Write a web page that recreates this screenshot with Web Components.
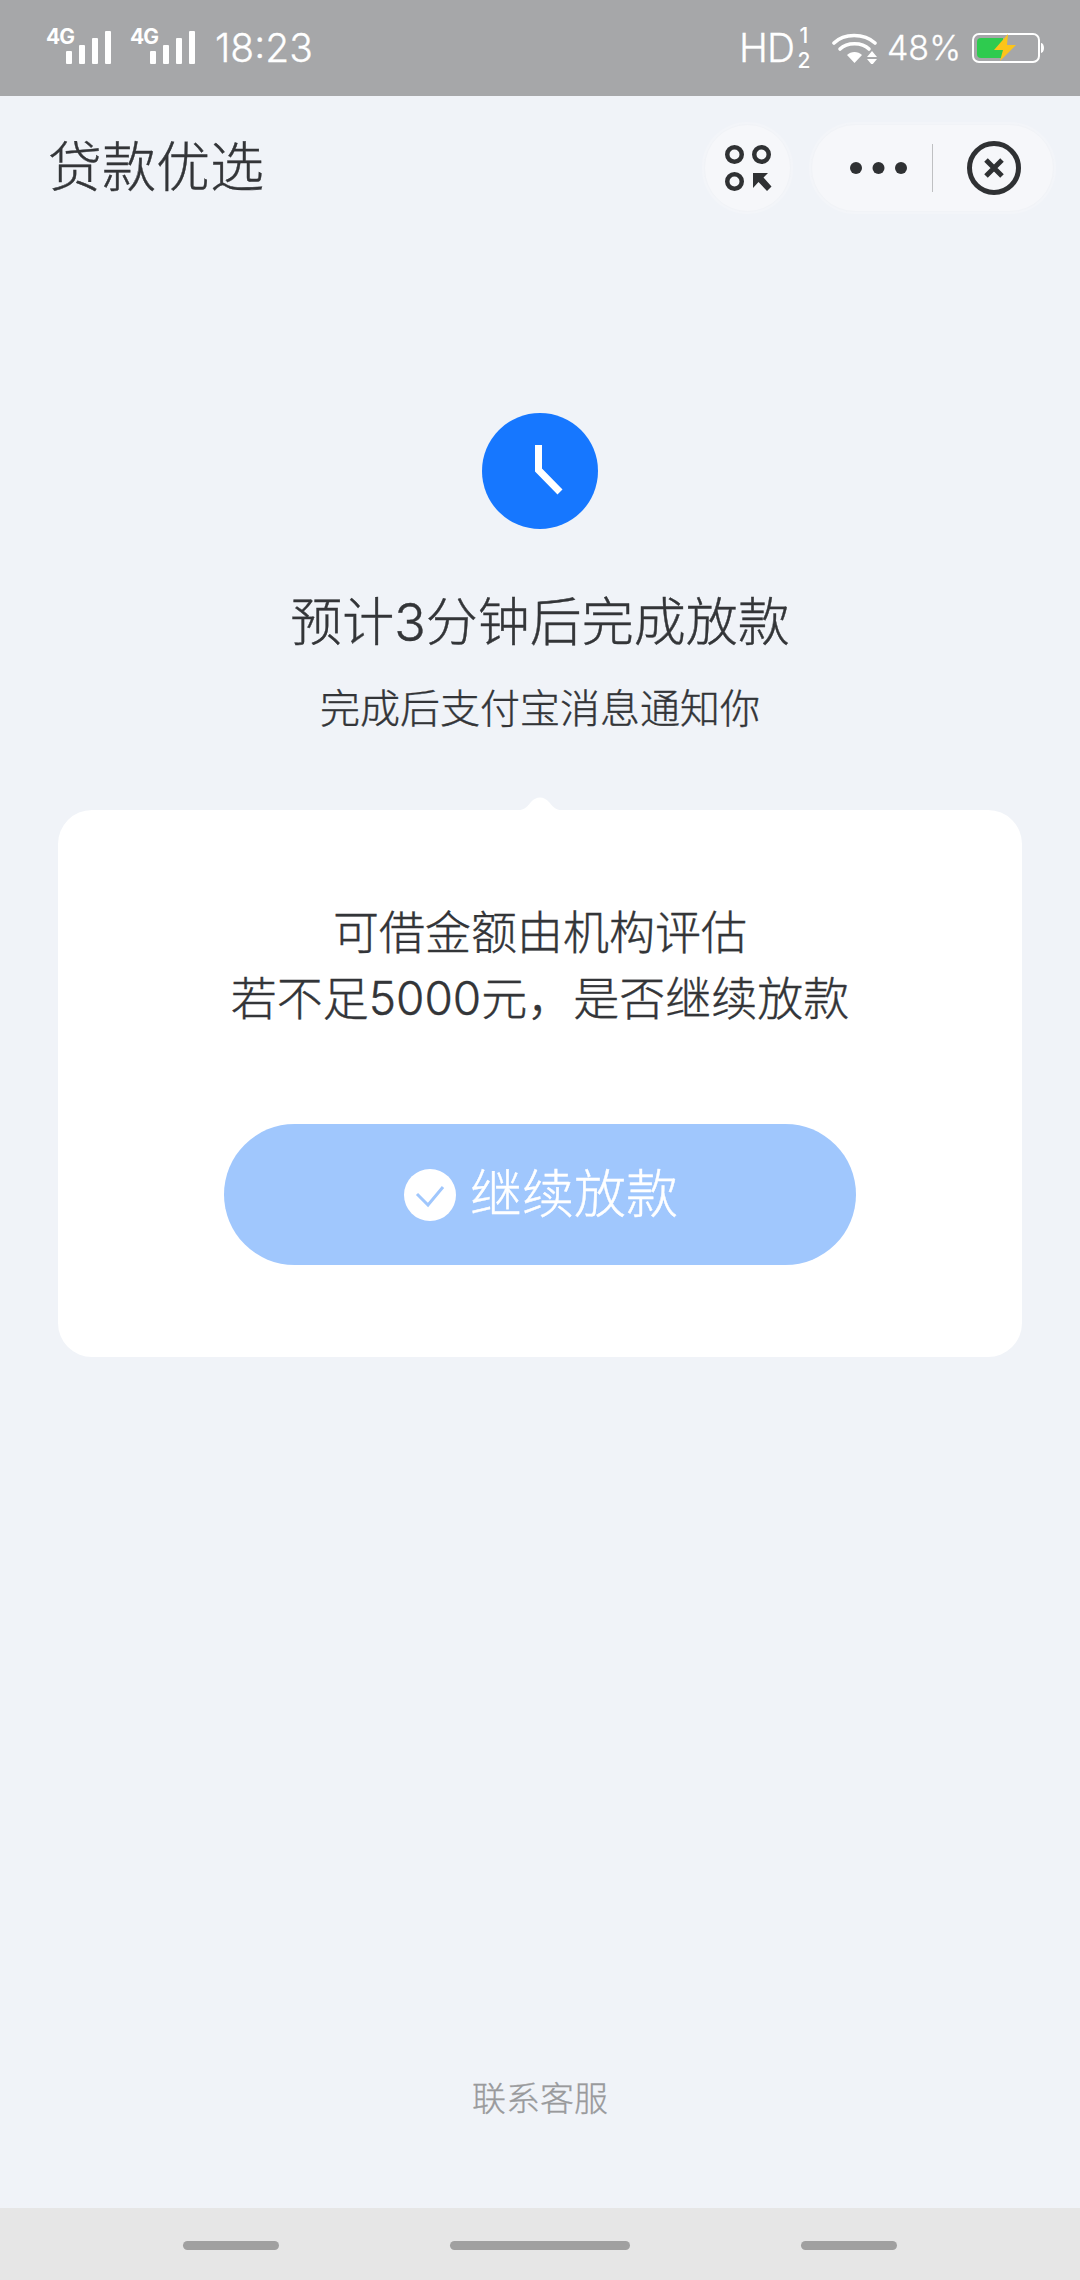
<!DOCTYPE html>
<html lang="zh">
<head>
<meta charset="utf-8">
<title>贷款优选</title>
<style>
    html, body {
        margin: 0;
        padding: 0;
        height: 2280px;
        background: #f0f3f8;
        font-family: 'Inter', 'Noto Sans CJK SC', 'Noto Sans', sans-serif;
    }
</style>
</head>
<body>
<loan-page>
    <status-bar slot="status"></status-bar>
    <nav-bar slot="nav">贷款优选</nav-bar>
    <clock-badge slot="main"></clock-badge>
    <result-title slot="main">
        预计3分钟后完成放款
        <span slot="sub">完成后支付宝消息通知你</span>
    </result-title>
    <tip-card slot="main">
        <span>可借金额由机构评估</span>
        <span>若不足5000元，是否继续放款</span>
        <check-button slot="action">继续放款</check-button>
    </tip-card>
    <span slot="footer">联系客服</span>
    <home-bar slot="home"></home-bar>
</loan-page>

<script>
class LoanPage extends HTMLElement {
    constructor() {
        super();
        this.shadowDOM = this.attachShadow({ mode: 'open' });
        this.shadowDOM.innerHTML = `
            <style>
                :host {
                    display: flex;
                    flex-direction: column;
                    height: 2280px;
                    background: #f0f3f8;
                }
                main {
                    flex: 1;
                    display: flex;
                    flex-direction: column;
                    align-items: center;
                    padding-top: 197px;
                }
                footer {
                    height: 134px;
                    text-align: center;
                    font-size: 34px;
                    line-height: 50px;
                    color: #999a9c;
                    font-weight: 300;
                    -webkit-text-stroke: 0.3px #999a9c;
                }
            </style>
            <slot name="status"></slot>
            <slot name="nav"></slot>
            <main><slot name="main"></slot></main>
            <footer><slot name="footer"></slot></footer>
            <slot name="home"></slot>
        `;
    }
}

class StatusBar extends HTMLElement {
    constructor() {
        super();
        this.shadowDOM = this.attachShadow({ mode: 'open' });
        const signal = `
            <span class="signal">
                <b>4G</b>
                <svg width="65" height="33" viewBox="0 0 65 33">
                    <g fill="#fff">
                        <rect x="20" y="20" width="6" height="13" rx="1"/>
                        <rect x="33" y="14" width="6" height="19" rx="1"/>
                        <rect x="46" y="7" width="6" height="26" rx="1"/>
                        <rect x="59" y="0" width="6" height="33" rx="1"/>
                    </g>
                </svg>
            </span>`;
        this.shadowDOM.innerHTML = `
            <style>
                :host {
                    display: flex;
                    box-sizing: border-box;
                    height: 96px;
                    padding: 0 0 0 46px;
                    align-items: center;
                    background: #a6a7a9;
                    color: #fff;
                    font-family: 'Inter', 'Noto Sans', sans-serif;
                    font-weight: 300;
                }
                .signal { position: relative; display: block; width: 65px; height: 33px; margin-right: 19px; margin-top: -1px; }
                .signal b {
                    position: absolute;
                    left: 0;
                    top: -7px;
                    font-size: 21px;
                    line-height: 26px;
                    font-weight: 700;
                    letter-spacing: -1px;
                }
                svg { display: block; }
                .time { font-size: 39px; line-height: 48px; margin-left: 1px; -webkit-text-stroke: 0.3px #fff; }
                .right { margin-left: auto; display: flex; align-items: center; padding-right: 36px; }
                .hd { font-size: 39px; line-height: 48px; letter-spacing: -1px; -webkit-text-stroke: 0.3px #fff; }
                .frac {
                    display: flex;
                    flex-direction: column;
                    font-size: 21px;
                    line-height: 25px;
                    font-weight: 500;
                    margin: 0 0 0 2px;
                    width: 16px;
                    align-items: center;
                }
                .wifi { margin-left: 20px; }
                .pct { font-size: 34px; line-height: 48px; margin-left: 9px; -webkit-text-stroke: 0.3px #fff; }
                .batt { margin-left: 11px; }
            </style>
            ${signal}${signal}
            <span class="time">18:23</span>
            <div class="right">
                <span class="hd">HD</span>
                <span class="frac"><span>1</span><span>2</span></span>
                <svg class="wifi" width="46" height="32" viewBox="0 0 46 32">
                    <g fill="none" stroke="#fff" stroke-width="3.6" stroke-linecap="round">
                        <path d="M2 11 C 12 1, 32 1, 43 11"/>
                        <path d="M8 17 C 15 10, 30 10, 37 17"/>
                    </g>
                    <path d="M15 23 C 19 19, 26 19, 30 23 L 22.5 31 Z" fill="#fff"/>
                    <path d="M40 19 L45 25 H35 Z M35 27 H45 L40 33 Z" fill="#fff"/>
                </svg>
                <span class="pct">48%</span>
                <svg class="batt" width="72" height="30" viewBox="0 0 72 30">
                    <rect x="1" y="1" width="66" height="28" rx="6" fill="none" stroke="#fff" stroke-width="2"/>
                    <path d="M5 9 a4 4 0 0 1 4 -4 H31 V25 H9 a4 4 0 0 1 -4 -4 Z" fill="#2ecb4f"/>
                    <path d="M36 1 L22 17 H31 L28 28 L44 12 H35 Z" fill="#fcc419"/>
                    <path d="M69 10 a3 5 0 0 1 0 10 Z" fill="#fff"/>
                </svg>
            </div>
        `;
    }
}

class NavBar extends HTMLElement {
    constructor() {
        super();
        this.shadowDOM = this.attachShadow({ mode: 'open' });
        this.shadowDOM.innerHTML = `
            <style>
                :host {
                    display: flex;
                    align-items: center;
                    box-sizing: border-box;
                    height: 96px;
                    margin-top: 24px;
                    padding: 0 26px 0 48px;
                    font-size: 54px;
                    font-weight: 300;
                    color: #333538;
                    -webkit-text-stroke: 0.4px #333538;
                }
                .title { flex: 1; line-height: 88px; }
                .round, .pill {
                    display: flex;
                    align-items: center;
                    height: 88px;
                    box-sizing: border-box;
                    background: #f6f7fa;
                    border: 1px solid #f1f3f7;
                    box-shadow: 0 0 0 2px #f3f5f9;
                    border-radius: 44px;
                }
                .round { width: 87px; justify-content: center; margin-right: 20px; }
                .pill { width: 243px; }
                .dots { width: 97px; display: flex; justify-content: flex-end; }
                .line { width: 1px; height: 48px; background: #bfc0c2; margin-left: 23px; }
                .close { margin-left: 34px; }
                svg { display: block; }
            </style>
            <span class="title"><slot></slot></span>
            <div class="round">
                <svg width="48" height="48" viewBox="0 0 48 48">
                    <g fill="none" stroke="#2f3133" stroke-width="4.5">
                        <circle cx="10.5" cy="10.5" r="7.25"/>
                        <circle cx="37.5" cy="10.5" r="7.25"/>
                        <circle cx="10.5" cy="37.5" r="7.25"/>
                    </g>
                    <path d="M29 29 H44 L39.5 33.5 L47.5 42.5 L43 47 L34.5 38 L29 44 Z" fill="#2f3133"/>
                </svg>
            </div>
            <div class="pill">
                <div class="dots">
                    <svg width="60" height="14" viewBox="0 0 60 14" fill="#2f3133">
                        <circle cx="7" cy="7" r="6"/>
                        <circle cx="29.5" cy="7" r="6"/>
                        <circle cx="52" cy="7" r="6"/>
                    </svg>
                </div>
                <span class="line"></span>
                <svg class="close" width="54" height="54" viewBox="0 0 54 54">
                    <circle cx="27" cy="27" r="24.5" fill="none" stroke="#2f3133" stroke-width="5"/>
                    <path d="M19 19 L35 35 M35 19 L19 35" stroke="#2f3133" stroke-width="5" fill="none"/>
                </svg>
            </div>
        `;
    }
}

class ClockBadge extends HTMLElement {
    constructor() {
        super();
        this.shadowDOM = this.attachShadow({ mode: 'open' });
        this.shadowDOM.innerHTML = `
            <style>
                :host { display: block; width: 116px; height: 116px; }
                svg { display: block; }
            </style>
            <svg width="116" height="116" viewBox="0 0 116 116">
                <circle cx="58" cy="58" r="58" fill="#1677ff"/>
                <path d="M56.5 32 V57 L78 79" fill="none" stroke="#fff" stroke-width="7"/>
            </svg>
        `;
    }
}

class ResultTitle extends HTMLElement {
    constructor() {
        super();
        this.shadowDOM = this.attachShadow({ mode: 'open' });
        this.shadowDOM.innerHTML = `
            <style>
                :host {
                    display: block;
                    margin-top: 56px;
                    text-align: center;
                    color: #333538;
                    font-weight: 300;
                    -webkit-text-stroke: 0.4px #333538;
                }
                h1 { margin: 0; font-size: 52px; line-height: 76px; font-weight: 300; }
                p { margin: 18px 0 0; font-size: 40px; line-height: 60px; }
            </style>
            <h1><slot></slot></h1>
            <p><slot name="sub"></slot></p>
        `;
    }
}

class TipCard extends HTMLElement {
    constructor() {
        super();
        this.shadowDOM = this.attachShadow({ mode: 'open' });
        this.shadowDOM.innerHTML = `
            <style>
                :host {
                    display: block;
                    position: relative;
                    box-sizing: border-box;
                    width: 964px;
                    height: 547px;
                    margin-top: 71px;
                    background: #fff;
                    border-radius: 34px;
                    text-align: center;
                    color: #333538;
                    font-size: 46px;
                    line-height: 66px;
                    font-weight: 300;
                    -webkit-text-stroke: 0.4px #333538;
                }
                .text { padding-top: 89px; display: flex; flex-direction: column; }
                .notch { position: absolute; left: 454px; top: -13px; display: block; }
                .action { display: flex; justify-content: center; margin-top: 93px; }
            </style>
            <svg class="notch" width="56" height="14" viewBox="0 0 56 14">
                <path d="M0 14 C 12 14, 15 10, 19 5 C 24 -1, 32 -1, 37 5 C 41 10, 44 14, 56 14 Z" fill="#fff"/>
            </svg>
            <div class="text"><slot></slot></div>
            <div class="action"><slot name="action"></slot></div>
        `;
    }
}

class CheckButton extends HTMLElement {
    constructor() {
        super();
        this.shadowDOM = this.attachShadow({ mode: 'open' });
        this.shadowDOM.innerHTML = `
            <style>
                :host {
                    display: flex;
                    align-items: center;
                    justify-content: center;
                    gap: 14px;
                    box-sizing: border-box;
                    width: 632px;
                    height: 141px;
                    padding-left: 2px;
                    background: #a0c7fd;
                    border-radius: 71px;
                    color: #fff;
                    font-size: 52px;
                    font-weight: 300;
                    -webkit-text-stroke: 0.4px #fff;
                }
                svg { display: block; }
            </style>
            <svg width="52" height="52" viewBox="0 0 52 52">
                <circle cx="26" cy="26" r="26" fill="#fff"/>
                <path d="M13 25 L24 36 L39 18" fill="none" stroke="#a0c7fd" stroke-width="3"/>
            </svg>
            <span><slot></slot></span>
        `;
    }
}

class HomeBar extends HTMLElement {
    constructor() {
        super();
        this.shadowDOM = this.attachShadow({ mode: 'open' });
        this.shadowDOM.innerHTML = `
            <style>
                :host {
                    display: flex;
                    box-sizing: border-box;
                    height: 72px;
                    padding: 33px 183px 0;
                    justify-content: space-between;
                    background: #e6e6e6;
                }
                span { display: block; width: 96px; height: 9px; border-radius: 5px; background: #a0a0a0; }
                span.wide { width: 180px; }
            </style>
            <span></span><span class="wide"></span><span></span>
        `;
    }
}

customElements.define('loan-page', LoanPage);
customElements.define('status-bar', StatusBar);
customElements.define('nav-bar', NavBar);
customElements.define('clock-badge', ClockBadge);
customElements.define('result-title', ResultTitle);
customElements.define('tip-card', TipCard);
customElements.define('check-button', CheckButton);
customElements.define('home-bar', HomeBar);
</script>
</body>
</html>
